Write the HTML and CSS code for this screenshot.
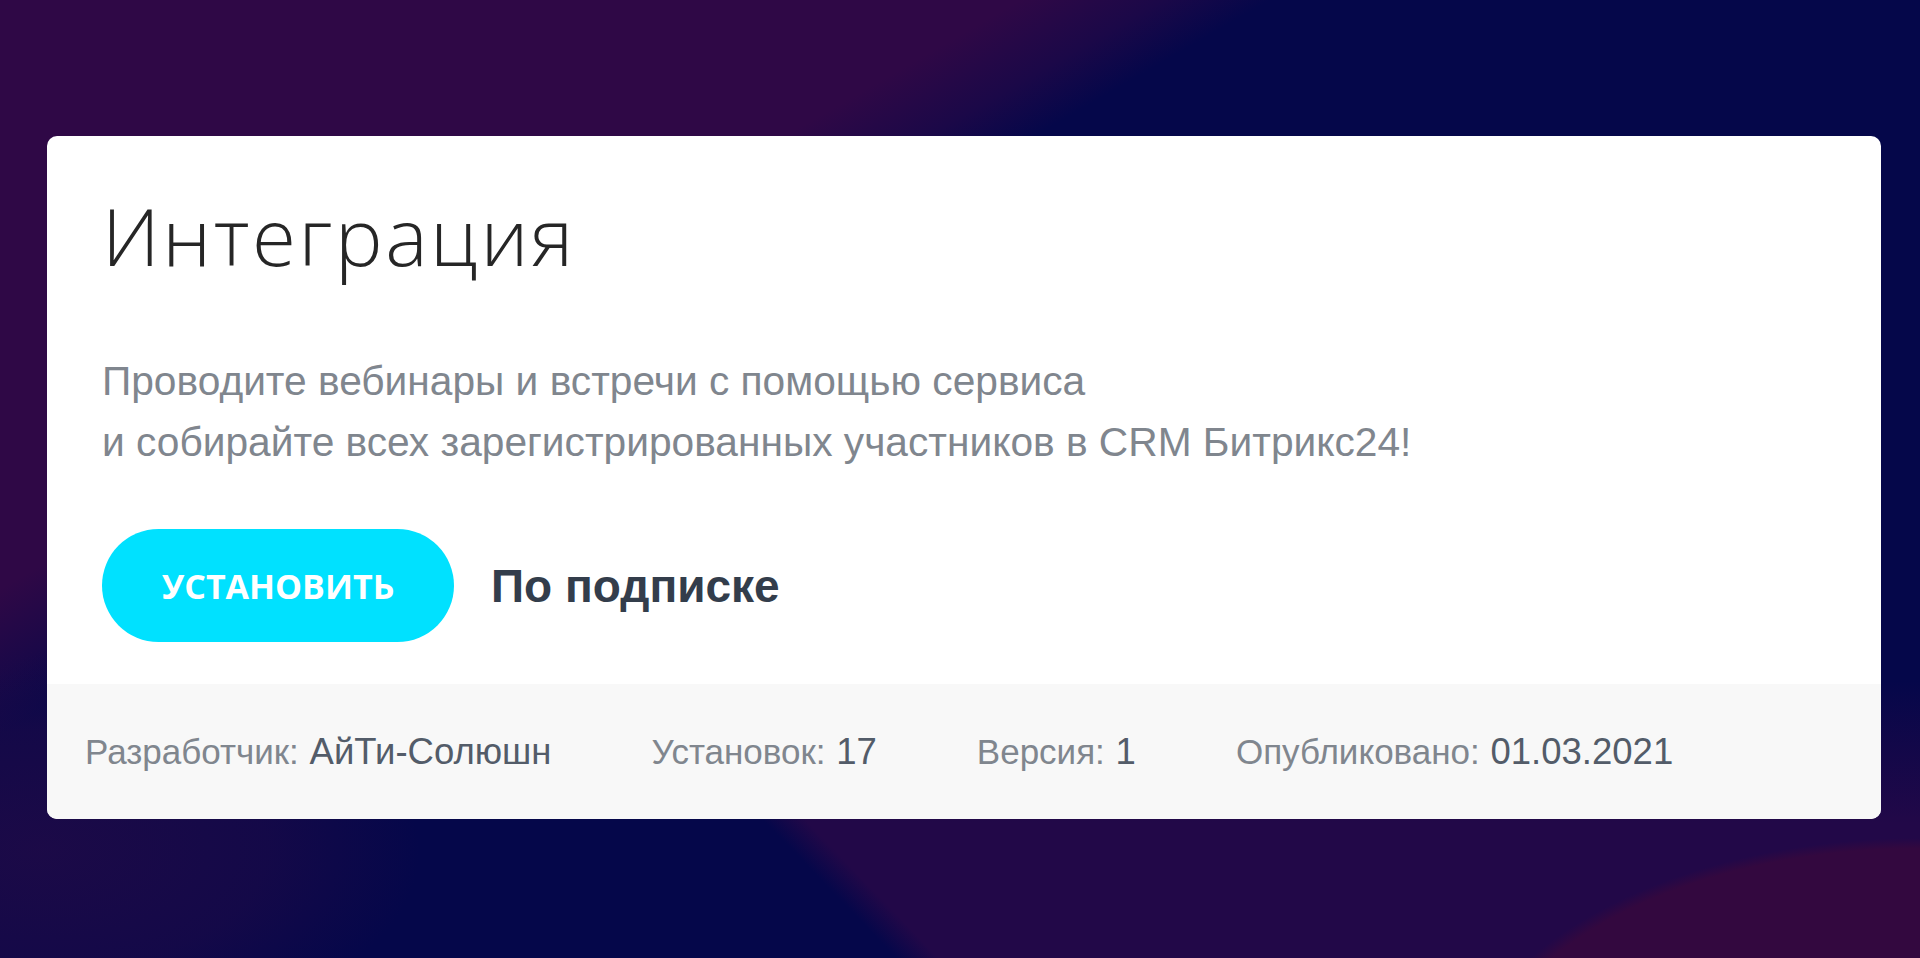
FILE: index.html
```html
<!DOCTYPE html>
<html lang="ru">

<head>
    <meta charset="UTF-8">
    <title>Интеграция</title>
    <link rel="stylesheet" href="styles.css">
</head>

<body>
    <div class="app-card">
        <div class="app-main">
            <h1 class="app-title">Интеграция</h1>
            <p class="app-desc">
                Проводите вебинары и встречи с помощью сервиса<br>
                и собирайте всех зарегистрированных участников в CRM Битрикс24!
            </p>
            <div class="app-actions">
                <button class="btn-install" type="button">Установить</button>
                <span class="app-price">По подписке</span>
            </div>
        </div>
        <div class="app-footer">
            <div class="meta-item">
                <span class="meta-label">Разработчик:</span>
                <span class="meta-value">АйТи-Солюшн</span>
            </div>
            <div class="meta-item">
                <span class="meta-label">Установок:</span>
                <span class="meta-value">17</span>
            </div>
            <div class="meta-item">
                <span class="meta-label">Версия:</span>
                <span class="meta-value">1</span>
            </div>
            <div class="meta-item">
                <span class="meta-label">Опубликовано:</span>
                <span class="meta-value">01.03.2021</span>
            </div>
        </div>
    </div>
</body>

</html>
```

FILE: styles.css
```css
html,
body {
    height: 100%;
}

/* background: purple swirl top-left, navy band, purple bottom-right */
body {
    margin: 0;
    padding: 136px 39px 0 47px;
    box-sizing: border-box;
    font-family: "Liberation Sans", Arial, sans-serif;
    background-color: #05074a;
    background-image:
        radial-gradient(464px 262px at 1920px 1100px, #33083f 0, #33083f 96%, rgba(51, 8, 63, 0) 100%),
        radial-gradient(380px 200px at 40px 850px, rgba(30, 10, 71, 0.9) 0, rgba(30, 10, 71, 0.6) 60%, rgba(30, 10, 71, 0) 100%),
        linear-gradient(150deg, #2f0846 0%, #2f0846 28.5%, #1b0848 32.5%, rgba(5, 7, 74, 0) 35.5%),
        linear-gradient(to bottom, #05074a 0, #05074a 71%, rgba(5, 7, 74, 0) 86%),
        linear-gradient(46deg, rgba(34, 8, 72, 0) 31.5%, #220848 33%);
    overflow: hidden;
}

.app-card {
    background-color: #fff;
    border-radius: 10px;
    overflow: hidden;
}

.app-main {
    padding: 51px 55px 42px;
}

.app-title {
    margin: 0;
    font-family: "Open Sans", sans-serif;
    font-weight: 300;
    font-size: 80px;
    line-height: 96px;
    letter-spacing: 2.6px;
    color: #262626;
}

.app-desc {
    margin: 68px 0 0;
    font-size: 40.7px;
    line-height: 61px;
    color: #80868e;
}

.app-actions {
    display: flex;
    align-items: center;
    margin-top: 56px;
}

.btn-install {
    width: 352px;
    height: 113px;
    border: none;
    border-radius: 57px;
    background-color: #00e1ff;
    color: #fff;
    font-family: "Open Sans", sans-serif;
    font-weight: 700;
    font-size: 34px;
    text-transform: uppercase;
    cursor: pointer;
}

.app-price {
    margin-left: 37px;
    font-weight: bold;
    font-size: 46px;
    color: #333d4b;
}

.app-footer {
    display: flex;
    align-items: center;
    height: 135px;
    padding-left: 38px;
    background-color: #f8f8f8;
    font-size: 35px;
}

.meta-item {
    margin-right: 100px;
}

.meta-label {
    color: #80868e;
    margin-right: 1px;
}

.meta-value {
    font-size: 36.5px;
    color: #535c69;
}
```
